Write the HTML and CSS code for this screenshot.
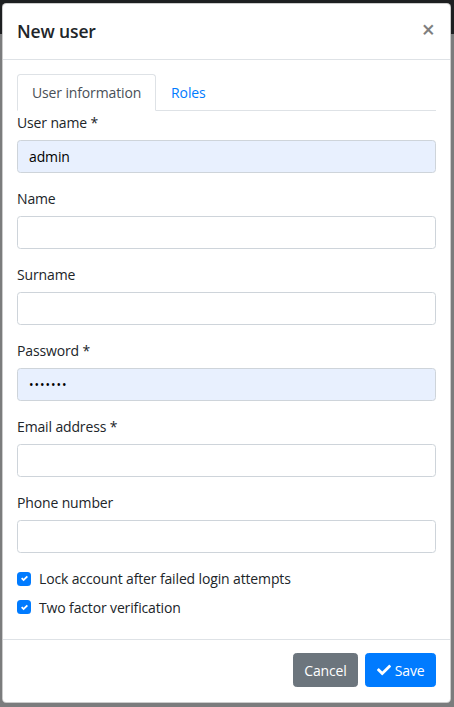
FILE: index.html
```html
<!DOCTYPE html>
<html lang="en">
<head>
<meta charset="utf-8">
<title>New user</title>
<link rel="stylesheet" href="styles.css">
</head>
<body>
<div class="modal">
  <div class="modal-header">
    <h5 class="modal-title">New user</h5>
    <button class="close" type="button">×</button>
  </div>
  <div class="modal-body">
    <ul class="nav-tabs">
      <li><a class="nav-link active">User information</a></li>
      <li><a class="nav-link">Roles</a></li>
    </ul>
    <div class="tab-content">
      <div class="form-group">
        <label>User name *</label>
        <input class="form-control autofill" type="text" value="admin">
      </div>
      <div class="form-group">
        <label>Name</label>
        <input class="form-control" type="text" value="">
      </div>
      <div class="form-group">
        <label>Surname</label>
        <input class="form-control" type="text" value="">
      </div>
      <div class="form-group">
        <label>Password *</label>
        <input class="form-control autofill" type="password" value="1234567">
      </div>
      <div class="form-group">
        <label>Email address *</label>
        <input class="form-control" type="text" value="">
      </div>
      <div class="form-group">
        <label>Phone number</label>
        <input class="form-control" type="text" value="">
      </div>
      <div class="check">
        <span class="check-box"><svg viewBox="0 0 8 8" width="7" height="7"><path fill="#fff" d="M6.564.75l-3.59 3.612-1.538-1.55L0 4.26 2.974 7.25 8 2.193z"/></svg></span>
        <span class="check-label">Lock account after failed login attempts</span>
      </div>
      <div class="check">
        <span class="check-box"><svg viewBox="0 0 8 8" width="7" height="7"><path fill="#fff" d="M6.564.75l-3.59 3.612-1.538-1.55L0 4.26 2.974 7.25 8 2.193z"/></svg></span>
        <span class="check-label">Two factor verification</span>
      </div>
    </div>
  </div>
  <div class="modal-footer">
    <button class="btn btn-secondary" type="button">Cancel</button>
    <button class="btn btn-primary" type="button"><svg class="btn-icon" viewBox="0 0 512 512" width="14" height="14"><path fill="#fff" d="M173.898 439.404l-166.4-166.4c-9.997-9.997-9.997-26.206 0-36.204l36.203-36.204c9.997-9.998 26.207-9.998 36.204 0L192 312.69 432.095 72.596c9.997-9.997 26.207-9.997 36.204 0l36.203 36.204c9.997 9.997 9.997 26.206 0 36.204l-294.4 294.401c-9.998 9.997-26.207 9.997-36.204-.001z"/></svg>Save</button>
  </div>
</div>
</body>
</html>
```
FILE: styles.css
```css
* { box-sizing: border-box; }
html, body { margin: 0; padding: 0; }
body {
  width: 454px;
  height: 707px;
  overflow: hidden;
  background: linear-gradient(#1d1f21 0, #1d1f21 34px, #7b7c7d 34px, #7b7c7d 100%);
  font-family: "Open Sans", "Noto Sans", sans-serif;
  font-size: 14px;
  line-height: 21px;
  color: #212529;
  letter-spacing: -0.01em;
}
.modal {
  margin: 3px 0 0 2px;
  width: 449px;
  background: #fff;
  border: 1px solid rgba(0,0,0,.2);
  border-radius: 4.2px;
}
.modal-header {
  display: flex;
  align-items: flex-start;
  justify-content: space-between;
  padding: 14px 14px 15px;
  border-bottom: 1px solid #dee2e6;
}
.modal-title {
  margin: 0;
  font-size: 17.5px;
  line-height: 26.25px;
  font-weight: 600;
  color: #212529;
}
.close {
  margin: -14px -14px -14px auto;
  padding: 15px 15px 13px;
  background: transparent;
  border: 0;
  font-family: "Open Sans", sans-serif;
  font-size: 23px;
  font-weight: 600;
  line-height: 21px;
  color: #000;
  opacity: .5;
}
.modal-body { padding: 14px; }
.nav-tabs {
  display: flex;
  margin: 0;
  padding: 0;
  list-style: none;
  border-bottom: 1px solid #dee2e6;
}
.nav-link {
  display: block;
  margin-bottom: -1px;
  padding: 7px 14px;
  border: 1px solid transparent;
  border-top-left-radius: 3.5px;
  border-top-right-radius: 3.5px;
  color: #007bff;
  text-decoration: none;
}
.nav-link.active {
  color: #495057;
  background: #fff;
  border-color: #dee2e6 #dee2e6 #fff;
}
.tab-content { padding-top: 1px; }
.form-group { margin-bottom: 15px; }
.form-group label {
  display: block;
  margin-bottom: 7px;
}
.form-control {
  display: block;
  width: 100%;
  height: 33px;
  padding: 5px 11px;
  font-family: inherit;
  font-size: 14px;
  line-height: 21px;
  letter-spacing: inherit;
  color: #000;
  background: #fff;
  border: 1px solid #ced4da;
  border-radius: 3.5px;
}
.form-control.autofill { background: #e8f0fe; }
input[type="password"].form-control { letter-spacing: 1px; font-size: 12px; }
.check {
  display: flex;
  align-items: center;
  gap: 8px;
  margin-bottom: 7.5px;
}
.check-box {
  width: 14px;
  height: 14px;
  display: flex;
  align-items: center;
  justify-content: center;
  background: #007bff;
  border-radius: 3.5px;
}
.check-box svg { display: block; }
.modal-footer {
  display: flex;
  justify-content: flex-end;
  align-items: center;
  padding: 9.5px 10.5px 12px;
  border-top: 1px solid #dee2e6;
}
.btn {
  display: inline-flex;
  align-items: center;
  margin: 3.5px;
  padding: 5.25px 10.5px;
  font-family: inherit;
  font-size: 14px;
  line-height: 21px;
  letter-spacing: inherit;
  color: #fff;
  border: 1px solid transparent;
  border-radius: 3.5px;
}
.btn-secondary { background: #6c757d; border-color: #6c757d; }
.btn-primary { background: #007bff; border-color: #007bff; }
.btn-icon { margin-right: 4px; }
```
